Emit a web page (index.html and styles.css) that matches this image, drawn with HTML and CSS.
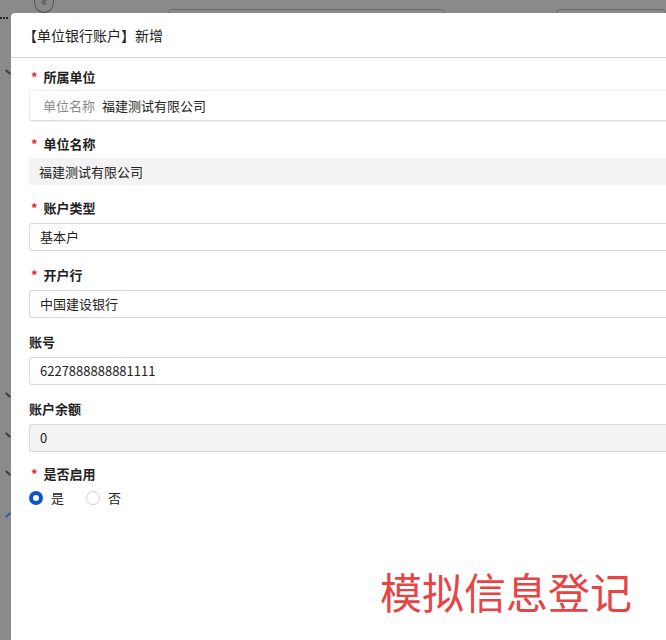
FILE: index.html
```html
<!DOCTYPE html>
<html lang="zh-CN">
<head>
<meta charset="utf-8">
<title>单位银行账户 新增</title>
<link rel="stylesheet" href="styles.css">
</head>
<body>
<div class="page">
  <div class="topbar">
    <span class="dots"><i></i><i></i><i></i></span>
    <span class="collapse">«</span>
    <span class="search search-a"></span>
    <span class="search search-b"></span>
  </div>
  <div class="side">
    <span class="chev chev-1"></span>
    <span class="chev chev-2"></span>
    <span class="chev chev-3"></span>
    <span class="chev chev-4"></span>
    <span class="chev chev-5 blue"></span>
  </div>
</div>

<div class="modal">
  <div class="modal-header">【单位银行账户】新增</div>
  <div class="modal-body">
    <div class="item item-first">
      <div class="label"><span class="req">*</span>所属单位</div>
      <div class="input input-picker"><span class="prefix">单位名称</span>福建测试有限公司</div>
    </div>
    <div class="item item-second">
      <div class="label"><span class="req">*</span>单位名称</div>
      <div class="input input-readonly">福建测试有限公司</div>
    </div>
    <div class="item">
      <div class="label"><span class="req">*</span>账户类型</div>
      <div class="input">基本户</div>
    </div>
    <div class="item">
      <div class="label"><span class="req">*</span>开户行</div>
      <div class="input">中国建设银行</div>
    </div>
    <div class="item">
      <div class="label">账号</div>
      <div class="input">6227888888881111</div>
    </div>
    <div class="item">
      <div class="label">账户余额</div>
      <div class="input input-disabled">0</div>
    </div>
    <div class="item item-last">
      <div class="label"><span class="req">*</span>是否启用</div>
      <div class="radios">
        <label class="radio"><span class="dot checked"></span>是</label>
        <label class="radio"><span class="dot"></span>否</label>
      </div>
    </div>
  </div>
  <div class="watermark">模拟信息登记</div>
</div>
</body>
</html>
```

FILE: styles.css
```css
* { box-sizing: border-box; }
html, body {
  margin: 0;
  padding: 0;
}
body {
  width: 666px;
  height: 640px;
  overflow: hidden;
  position: relative;
  background: #8a8a8a;
  font-family: "Noto Sans CJK SC", "Microsoft YaHei", sans-serif;
  color: #333;
}

/* background page seen through the mask */
.page {
  display: flex;
  flex-direction: column;
}
.topbar {
  height: 13px;
  display: flex;
  align-items: flex-start;
}
.dots {
  display: flex;
  gap: 1px;
  margin-top: 17px;
  width: 12px;
}
.dots i {
  width: 2px;
  height: 2px;
  background: #2a2a2a;
}
.collapse {
  margin-left: 23px;
  margin-top: -9px;
  width: 22px;
  height: 22px;
  border: 1px solid #555;
  border-radius: 50%;
  font-size: 13px;
  line-height: 18px;
  text-align: center;
  color: #444;
}
.search {
  margin-top: 9px;
  height: 20px;
  border: 1px solid #6a6a6a;
  border-radius: 4px;
}
.search-a { margin-left: 114px; width: 304px; }
.search-b { margin-left: 111px; width: 120px; }

.side {
  display: flex;
  flex-direction: column;
  padding-left: 5px;
}
.chev {
  width: 6px;
  height: 2px;
  background: #3a3a3a;
  transform: rotate(40deg);
}
.chev-1 { margin-top: 58px; }
.chev-2 { margin-top: 321px; }
.chev-3 { margin-top: 38px; }
.chev-4 { margin-top: 36px; }
.chev-5 { margin-top: 40px; transform: rotate(-40deg); }
.chev.blue { background: #2f5d96; }

/* modal */
.modal {
  position: absolute;
  left: 11px;
  top: 13px;
  width: 720px;
  height: 700px;
  background: #fff;
  border-top-left-radius: 4px;
}
.modal-header {
  height: 45px;
  padding-left: 12px;
  font-size: 14px;
  line-height: 44px;
  color: #222;
  border-bottom: 1px solid #d4d4d4;
}
.modal-body {
  padding: 9px 0 0 18px;
}
.item {
  margin-bottom: 14px;
}
.label {
  height: 20px;
  line-height: 20px;
  font-size: 13px;
  font-weight: bold;
  color: #222;
  margin-bottom: 5px;
}
.req {
  color: #f5222d;
  font-weight: bold;
  margin-left: 2px;
  margin-right: 6px;
}
.input {
  height: 28px;
  line-height: 26px;
  border: 1px solid #d9d9d9;
  border-radius: 3px 0 0 3px;
  border-right: none;
  padding-left: 10px;
  font-size: 13px;
  color: #222;
}
.item-first .label { margin-bottom: 3px; }
.item-first .input { height: 31px; line-height: 29px; }
.item-first { margin-bottom: 13px; }
.item-second .label { margin-bottom: 4px; }
.item-second { margin-bottom: 13px; }
.input-picker {
  border-color: #ececec;
  border-bottom-color: #dcdcdc;
  box-shadow: 0 1px 2px rgba(0, 0, 0, 0.06);
  padding-left: 13px;
}
.prefix {
  color: #8a8a8a;
  margin-right: 7px;
}
.input-readonly {
  height: 27px;
  border: none;
  background: #f3f3f3;
  line-height: 27px;
}
.input-disabled {
  background: #f3f3f3;
}

.item-last { margin-top: -2px; }
.item-last .label { margin-bottom: 6px; }
.radios {
  display: flex;
  align-items: center;
  gap: 22px;
  font-size: 13px;
  height: 16px;
}
.radio {
  display: flex;
  align-items: center;
  gap: 8px;
  color: #222;
  line-height: 16px;
}
.dot {
  width: 14px;
  height: 14px;
  border-radius: 50%;
  border: 1px solid #d0d0d0;
  background: #fff;
}
.dot.checked {
  border: 4px solid #0a56cc;
}

.watermark {
  position: absolute;
  left: 369px;
  top: 553px;
  font-size: 42px;
  line-height: 50px;
  color: #e84444;
}
```
